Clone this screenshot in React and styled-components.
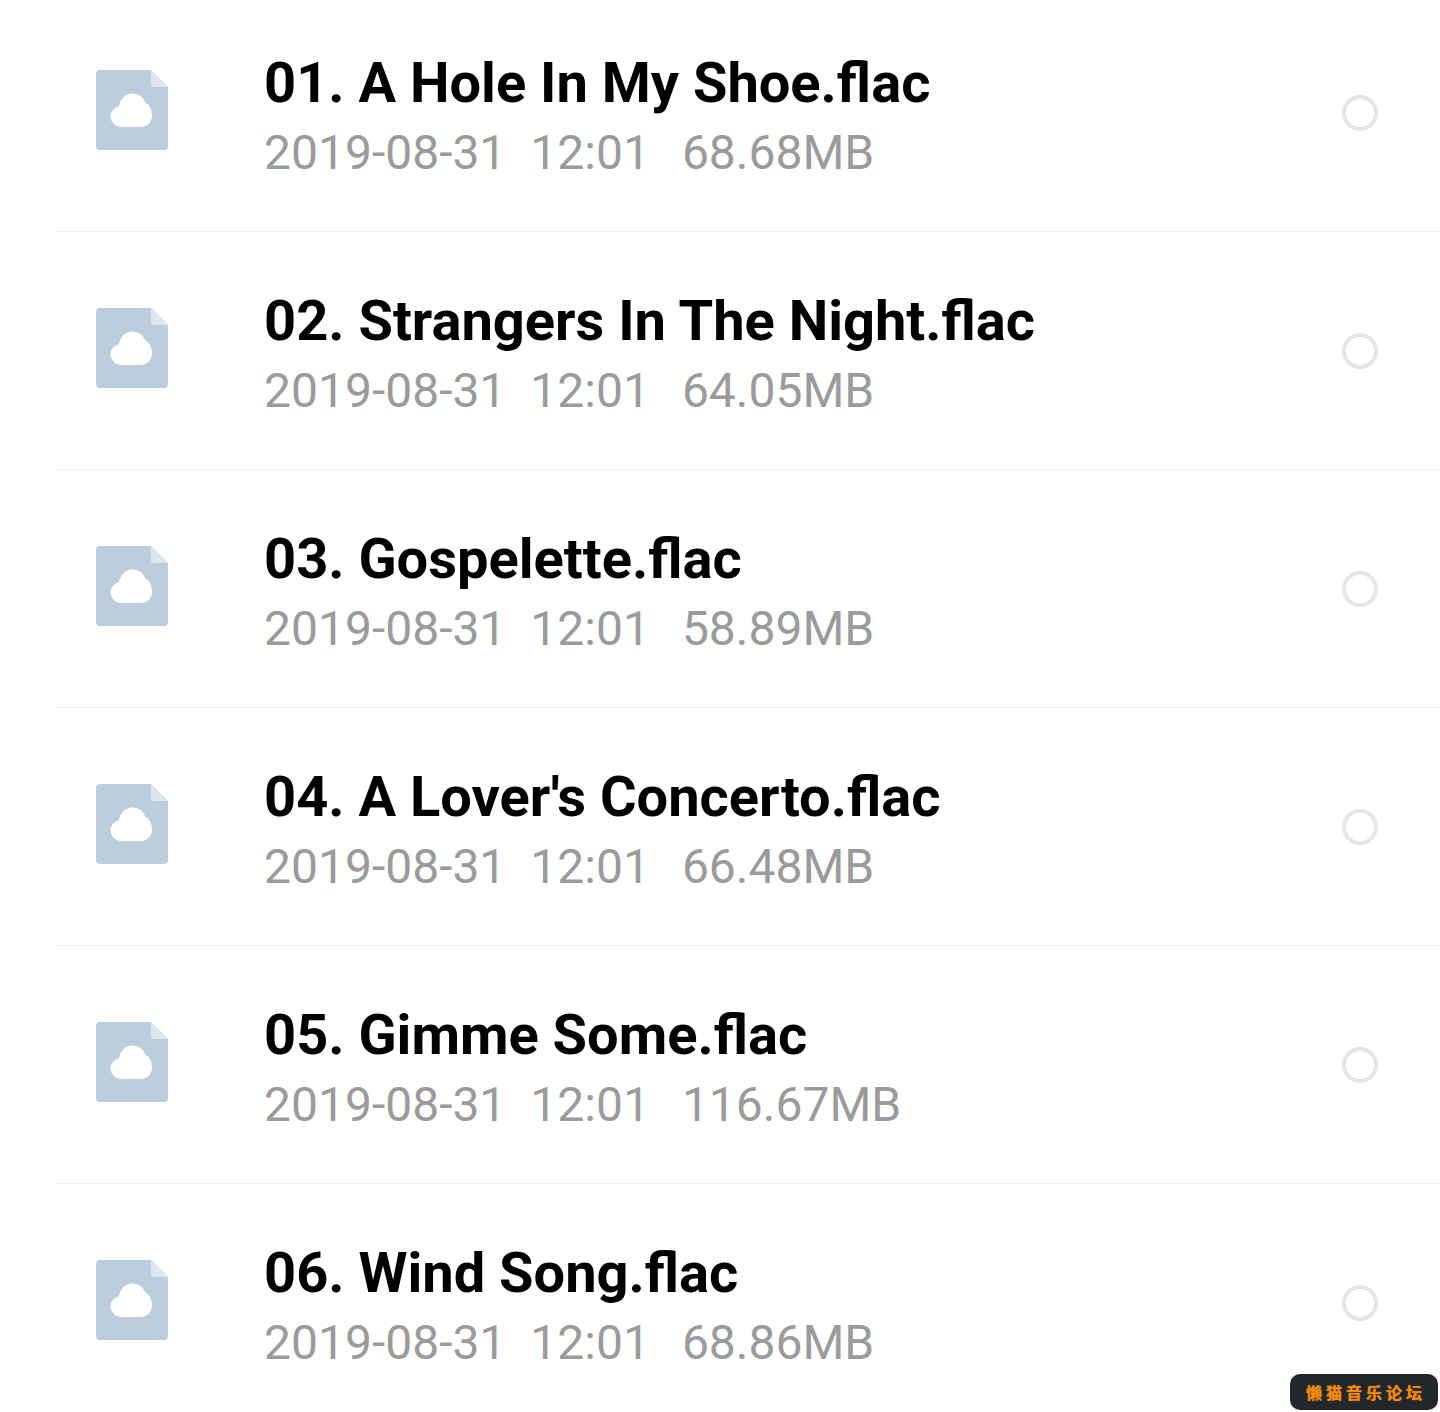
import styled, { createGlobalStyle } from "styled-components";

const tracks = [
  { name: "01. A Hole In My Shoe.flac", size: "68.68MB" },
  { name: "02. Strangers In The Night.flac", size: "64.05MB" },
  { name: "03. Gospelette.flac", size: "58.89MB" },
  { name: "04. A Lover's Concerto.flac", size: "66.48MB" },
  { name: "05. Gimme Some.flac", size: "116.67MB" },
  { name: "06. Wind Song.flac", size: "68.86MB" },
];

const FileIcon = () => (
  <IconSvg viewBox="0 0 72 80">
    <path
      d="M4 0H55L72 17V76a4 4 0 0 1-4 4H4a4 4 0 0 1-4-4V4a4 4 0 0 1 4-4Z"
      fill="#bccddc"
    />
    <path d="M55 0L72 17H58a3 3 0 0 1-3-3Z" fill="#dde7f0" />
    <path
      d="M25 57a10.500 10.500 0 0 1-2-20.800C24 28.500 30 23.500 36.500 23.500c6 0 11 3.600 13 9.500C53.500 34 56 40 56 45.500 56 52 51.500 57 45 57Z"
      fill="#fff"
    />
  </IconSvg>
);

const App = () => {
  return (
    <Page>
      <GlobalStyle />
      <List>
        {tracks.map((track) => (
          <Row key={track.name}>
            <FileIcon />
            <Info>
              <Title>{track.name}</Title>
              <Meta>
                <span>2019-08-31</span>
                <span>12:01</span>
                <Size>{track.size}</Size>
              </Meta>
            </Info>
            <Radio />
          </Row>
        ))}
      </List>
      <Watermark>懒猫音乐论坛</Watermark>
    </Page>
  );
};

export default App;

const GlobalStyle = createGlobalStyle`
  html, body {
    margin: 0;
    padding: 0;
    background: #fff;
  }
`;

const Page = styled.div`
  position: relative;
  width: 1440px;
  height: 1412px;
  overflow: hidden;
  background: #fff;
  font-family: Roboto, "Noto Sans", sans-serif;
`;

const List = styled.div`
  margin-top: -6px;
  margin-left: 56px;
`;

const Row = styled.div`
  box-sizing: border-box;
  height: 238px;
  display: flex;
  align-items: center;
  padding-left: 40px;
  border-bottom: 1px solid #f0f0f0;
`;

const IconSvg = styled.svg`
  width: 72px;
  height: 80px;
  flex: none;
  margin-top: -5px;
`;

const Info = styled.div`
  flex: 1;
  margin-left: 96px;
  margin-top: 6px;
`;

const Title = styled.div`
  font-size: 56px;
  font-weight: 700;
  line-height: 64px;
  color: #000;
`;

const Meta = styled.div`
  display: flex;
  gap: 24px;
  margin-top: 11px;
  font-size: 48px;
  line-height: 54px;
  color: #9b9b9b;
`;

const Size = styled.span`
  margin-left: 8px;
`;

const Radio = styled.div`
  box-sizing: border-box;
  width: 36px;
  height: 36px;
  margin-right: 62px;
  margin-top: 1px;
  border: 4px solid #e6e6e6;
  border-radius: 50%;
`;

const Watermark = styled.div`
  position: absolute;
  right: 2px;
  bottom: 2px;
  width: 148px;
  height: 36px;
  display: flex;
  align-items: center;
  justify-content: center;
  border-radius: 10px;
  background: #23272b;
  color: #f08a12;
  font-family: "Noto Sans CJK SC", sans-serif;
  font-size: 16px;
  font-weight: 700;
  letter-spacing: 4px;
  text-indent: 4px;
  text-shadow: 0 0 1px #f08a12;
`;
